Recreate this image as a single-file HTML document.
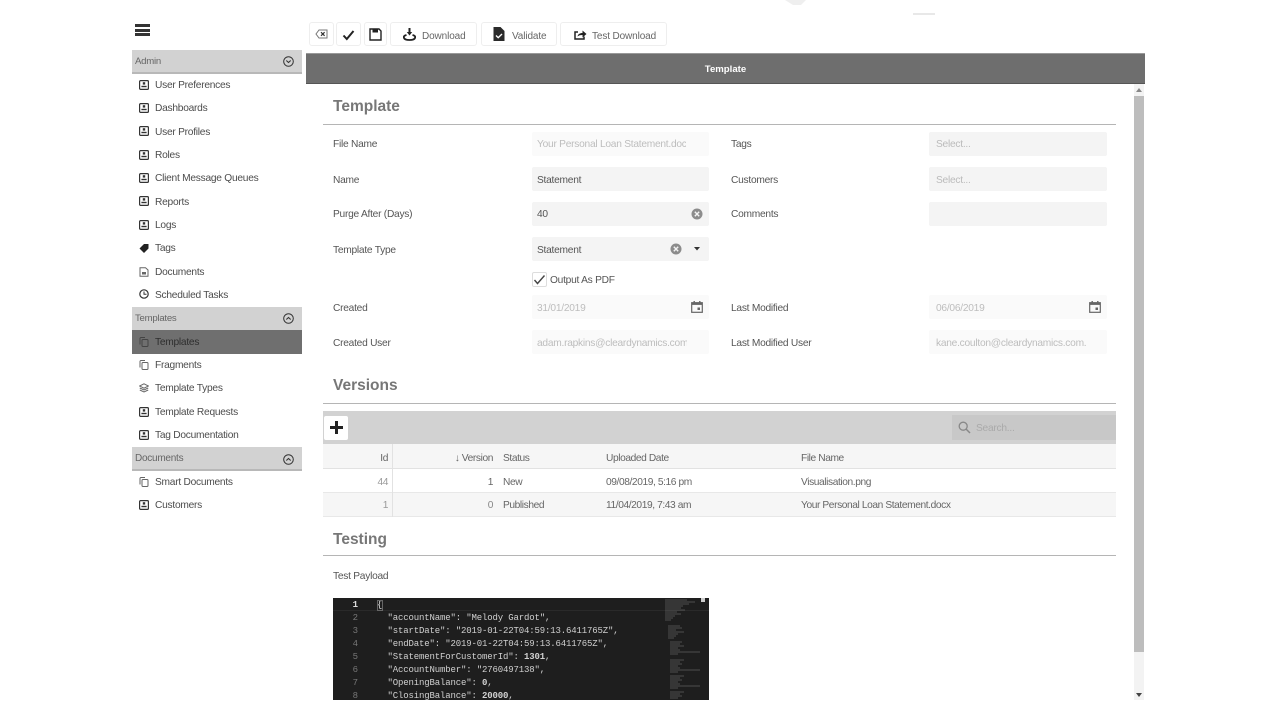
<!DOCTYPE html>
<html lang="en"><head><meta charset="utf-8"><title>Template</title>
<style>
*{box-sizing:border-box}
html,body{margin:0;padding:0;background:#fff;width:1280px;height:720px;overflow:hidden}
#p{position:relative;width:1280px;height:720px;font-family:"Liberation Sans",sans-serif;font-size:10.2px;color:#555;filter:blur(.35px);overflow:hidden}
#p div,#p span.a,#p svg.a{position:absolute}
.t{white-space:nowrap;line-height:14px;margin-top:1px;letter-spacing:-.25px}
.h{left:132px;width:170px;height:24px;background:#d2d2d2;border-bottom:2px solid #b8b8b8}
.hl{left:135px;color:#666;font-size:9.6px}
.n{left:155px;color:#4c4c4c}
.i{left:139px;width:10px;height:10px}
.b{top:22px;height:24px;background:#fff;border:1px solid #eee;border-radius:3px}
.bt{top:29px;color:#666;font-size:10px;letter-spacing:-.12px}
.l{left:333px;color:#555}.l2{left:731px;color:#555}
.f{background:#f4f4f4;border-radius:2px;height:24px;width:177px}
.f2{left:532px}.f3{left:929px;width:178px}
.d{background:#fafafa}
.v{color:#555}.ph{color:#bbb}.dis{color:#bdbdbd}
.sec{left:333px;font-weight:bold;font-size:15.5px;color:#777;line-height:18px;white-space:nowrap;margin-top:1px}
.ln{left:323px;width:793px;height:1px;background:#b5b5b5}
.code{left:377px;font-family:"Liberation Mono",monospace;font-size:9px;letter-spacing:-.15px;color:#d0d0d0;white-space:pre;line-height:13px;margin-top:1px}
.no{left:340px;width:18px;text-align:right;font-family:"Liberation Mono",monospace;font-size:9px;color:#777;line-height:13px;margin-top:1px}
.tc{color:#666;white-space:nowrap;line-height:14px;margin-top:1px;letter-spacing:-.4px}
</style></head><body>
<svg width="0" height="0" style="position:absolute"><defs>
<symbol id="card" viewBox="0 0 10 10"><rect x=".6" y=".6" width="8.8" height="8.8" rx="1" fill="none" stroke="#333" stroke-width="1.2"/><rect x="3.8" y="2.2" width="2.4" height="2.4" fill="#333"/><rect x="2.4" y="5.8" width="5.2" height="1.4" fill="#333"/></symbol>
<symbol id="copy" viewBox="0 0 10 10"><path d="M1 7.5V1.5a1 1 0 0 1 1-1h4" fill="none" stroke="#666" stroke-width="1"/><rect x="3" y="2.5" width="6" height="7" rx="1" fill="none" stroke="#666" stroke-width="1"/></symbol>
<symbol id="copyd" viewBox="0 0 10 10"><path d="M1 7.5V1.5a1 1 0 0 1 1-1h4" fill="none" stroke="#444" stroke-width="1"/><rect x="3" y="2.5" width="6" height="7" rx="1" fill="none" stroke="#444" stroke-width="1"/></symbol>
<symbol id="circ" viewBox="0 0 11 11"><circle cx="5.500" cy="5.500" r="4.800" fill="none" stroke="#333" stroke-width="1"/><path d="M3.300 6.500l2.200-2 2.200 2" fill="none" stroke="#333" stroke-width="1.100"/></symbol>
<symbol id="clear" viewBox="0 0 12 12"><circle cx="6" cy="6" r="5.500" fill="#8c8c8c"/><path d="M3.800 3.800l4.400 4.400M8.200 3.800l-4.400 4.400" stroke="#f4f4f4" stroke-width="1.400"/></symbol>
<symbol id="cal" viewBox="0 0 12 12"><rect x=".7" y="1.700" width="10.600" height="9.600" fill="none" stroke="#666" stroke-width="1.200"/><rect x=".7" y="1.700" width="10.600" height="2.200" fill="#666"/><rect x="2.500" y="0" width="1.400" height="2" fill="#666"/><rect x="8.100" y="0" width="1.400" height="2" fill="#666"/><rect x="6.500" y="6.500" width="2.500" height="2.500" fill="#666"/></symbol>
</defs></svg>
<div id="p">
<!-- faint top marks -->
<svg class="a" style="left:780px;top:0" width="160" height="18"><path d="M5 0h21l-5 5h-8z" fill="#efefef"/><rect x="133" y="13" width="22" height="2" fill="#e8e8e8"/></svg>

<!-- hamburger -->
<div style="left:135px;top:24px;width:15px;height:3px;background:#333"></div>
<div style="left:135px;top:29px;width:15px;height:3px;background:#333"></div>
<div style="left:135px;top:33px;width:15px;height:3px;background:#333"></div>

<!-- sidebar -->
<div class="h" style="top:50px"></div><div class="t hl" style="top:54px">Admin</div>
<svg class="a" style="left:283px;top:56px" width="11" height="11"><use href="#circ" transform="rotate(180 5.500 5.500)"/></svg>
<svg class="a i" style="top:80px"><use href="#card"/></svg><div class="t n" style="top:78px">User Preferences</div>
<svg class="a i" style="top:103px"><use href="#card"/></svg><div class="t n" style="top:101px">Dashboards</div>
<svg class="a i" style="top:126px"><use href="#card"/></svg><div class="t n" style="top:125px">User Profiles</div>
<svg class="a i" style="top:150px"><use href="#card"/></svg><div class="t n" style="top:148px">Roles</div>
<svg class="a i" style="top:173px"><use href="#card"/></svg><div class="t n" style="top:171px">Client Message Queues</div>
<svg class="a i" style="top:196px"><use href="#card"/></svg><div class="t n" style="top:195px">Reports</div>
<svg class="a i" style="top:220px"><use href="#card"/></svg><div class="t n" style="top:218px">Logs</div>
<svg class="a i" style="top:243px" viewBox="0 0 10 10"><path d="M.5 5.500L5 1h4.500v4.500L5 10z" fill="#222"/></svg><div class="t n" style="top:241px">Tags</div>
<svg class="a i" style="top:267px" viewBox="0 0 10 10"><path d="M1 .8h5.500L9 3v6.200H1z" fill="none" stroke="#666"/><rect x="3" y="5" width="4" height="2.500" fill="#666"/></svg><div class="t n" style="top:265px">Documents</div>
<svg class="a i" style="top:289px" viewBox="0 0 10 10"><circle cx="5" cy="5" r="4.200" fill="none" stroke="#333" stroke-width="1.200"/><path d="M5 2.500V5.300h2.500" fill="none" stroke="#333"/></svg><div class="t n" style="top:288px">Scheduled Tasks</div>

<div class="h" style="top:307px;border:0"></div><div class="t hl" style="top:311px">Templates</div>
<svg class="a" style="left:283px;top:313px" width="11" height="11"><use href="#circ"/></svg>
<div style="left:132px;top:330px;width:170px;height:24px;background:#6f6f6f"></div>
<svg class="a i" style="top:337px"><use href="#copyd"/></svg><div class="t n" style="top:335px;color:#2e2e2e">Templates</div>
<svg class="a i" style="top:360px"><use href="#copy"/></svg><div class="t n" style="top:358px">Fragments</div>
<svg class="a i" style="top:383px" viewBox="0 0 10 10"><path d="M5 .8L9.500 3 5 5.200.5 3z" fill="none" stroke="#666"/><path d="M.8 5L5 7l4.200-2M.8 7L5 9l4.200-2" fill="none" stroke="#666"/></svg><div class="t n" style="top:381px">Template Types</div>
<svg class="a i" style="top:407px"><use href="#card"/></svg><div class="t n" style="top:405px">Template Requests</div>
<svg class="a i" style="top:430px"><use href="#card"/></svg><div class="t n" style="top:428px">Tag Documentation</div>
<div class="h" style="top:447px"></div><div class="t hl" style="top:451px;font-size:10px">Documents</div>
<svg class="a" style="left:283px;top:454px" width="11" height="11"><use href="#circ"/></svg>
<svg class="a i" style="top:477px"><use href="#copy"/></svg><div class="t n" style="top:475px">Smart Documents</div>
<svg class="a i" style="top:500px"><use href="#card"/></svg><div class="t n" style="top:498px">Customers</div>

<!-- toolbar -->
<div class="b" style="left:309px;width:25px"></div>
<svg class="a" style="left:315px;top:29px" width="13" height="10" viewBox="0 0 13 10"><path d="M4 1h8v8H4L1 5z" fill="none" stroke="#777"/><path d="M6 3.200l3.600 3.600M9.600 3.200L6 6.800" stroke="#333" stroke-width="1.200"/></svg>
<div class="b" style="left:336px;width:25px"></div>
<svg class="a" style="left:342px;top:29px" width="13" height="12" viewBox="0 0 13 12"><path d="M1.500 6.500l3.300 3.500L11.500 2" fill="none" stroke="#222" stroke-width="2"/></svg>
<div class="b" style="left:364px;width:23px"></div>
<svg class="a" style="left:369px;top:28px" width="13" height="13" viewBox="0 0 13 13"><path d="M1 1h9l2 2v9H1z" fill="none" stroke="#222" stroke-width="1.400"/><rect x="3.500" y="1" width="5.500" height="3.500" fill="#222"/></svg>
<div class="b" style="left:390px;width:87px"></div>
<svg class="a" style="left:403px;top:28px" width="13" height="13" viewBox="0 0 13 13"><path d="M6.500 0v5" stroke="#222" stroke-width="2"/><path d="M3.800 4h5.400L6.500 7.500z" fill="#222"/><path d="M3.500 7C1.500 7.500.6 8.500.8 9.500c.4 1.700 3 2.500 5.700 2.500s5.300-.8 5.700-2.500c.2-1-.7-2-2.700-2.500" fill="none" stroke="#222" stroke-width="1.800"/></svg>
<div class="t bt" style="left:422px">Download</div>
<div class="b" style="left:481px;width:76px"></div>
<svg class="a" style="left:493px;top:27px" width="12" height="14" viewBox="0 0 12 14"><path d="M.5 0h7L11.500 4v10H.5z" fill="#2a2a2a"/><path d="M3 8.500l2.200 2.200L9 7" fill="none" stroke="#fff" stroke-width="1.400"/></svg>
<div class="t bt" style="left:512px">Validate</div>
<div class="b" style="left:560px;width:107px"></div>
<svg class="a" style="left:574px;top:30px" width="13" height="10" viewBox="0 0 13 10"><path d="M4 2H1v7h9V6.500" fill="none" stroke="#222" stroke-width="1.500"/><path d="M3.500 6.500C4 4 6 3 8.500 3V.5L12.500 4 8.500 7.500V5C6.500 5 5 5.300 3.500 6.500z" fill="#222"/></svg>
<div class="t bt" style="left:592px">Test Download</div>

<!-- title bar -->
<div style="left:306px;top:53px;width:839px;height:31px;background:#6e6e6e;border-top:1px solid #999;border-bottom:1px solid #555"></div>
<div class="t" style="left:306px;top:62px;width:839px;text-align:center;color:#fff;font-weight:bold;font-size:9.6px;letter-spacing:0">Template</div>

<!-- scrollbar -->
<div style="left:1134px;top:84px;width:10px;height:616px;background:#f3f3f3"></div>
<div style="left:1134px;top:96px;width:10px;height:556px;background:#bdbdbd"></div>
<svg class="a" style="left:1136px;top:88px" width="6" height="4"><path d="M0 4L3 0l3 4z" fill="#888"/></svg>
<svg class="a" style="left:1136px;top:693px" width="6" height="4"><path d="M0 0h6L3 4z" fill="#444"/></svg>

<!-- Template section -->
<div class="sec" style="top:97px">Template</div>
<div class="ln" style="top:124px"></div>

<div class="t l" style="top:137px">File Name</div>
<div class="f f2 d" style="top:132px"></div><div class="t dis" style="left:537px;top:137px;width:149px;overflow:hidden">Your Personal Loan Statement.docx</div>
<div class="t l2" style="top:137px">Tags</div>
<div class="f f3" style="top:132px"></div><div class="t ph" style="left:936px;top:137px">Select...</div>

<div class="t l" style="top:173px">Name</div>
<div class="f f2" style="top:167px"></div><div class="t v" style="left:537px;top:173px">Statement</div>
<div class="t l2" style="top:173px">Customers</div>
<div class="f f3" style="top:167px"></div><div class="t ph" style="left:936px;top:173px">Select...</div>

<div class="t l" style="top:207px">Purge After (Days)</div>
<div class="f f2" style="top:202px"></div><div class="t v" style="left:537px;top:207px">40</div>
<svg class="a" style="left:691px;top:208px" width="12" height="12"><use href="#clear"/></svg>
<div class="t l2" style="top:207px">Comments</div>
<div class="f f3" style="top:202px"></div>

<div class="t l" style="top:243px">Template Type</div>
<div class="f f2" style="top:237px"></div><div class="t v" style="left:537px;top:243px">Statement</div>
<svg class="a" style="left:670px;top:243px" width="12" height="12"><use href="#clear"/></svg>
<svg class="a" style="left:694px;top:247px" width="6" height="4"><path d="M0 0h6L3 3.500z" fill="#333"/></svg>

<div style="left:532px;top:272px;width:15px;height:15px;background:#fff;border:1px solid #ddd;border-radius:2px"></div>
<svg class="a" style="left:533px;top:274px" width="13" height="11" viewBox="0 0 13 11"><path d="M1.500 6l3 3.500L11.500 1.500" fill="none" stroke="#444" stroke-width="1.400"/></svg>
<div class="t v" style="left:550px;top:273px">Output As PDF</div>

<div class="t l" style="top:301px">Created</div>
<div class="f f2 d" style="top:295px"></div><div class="t dis" style="left:537px;top:301px">31/01/2019</div>
<svg class="a" style="left:691px;top:301px" width="12" height="12"><use href="#cal"/></svg>
<div class="t l2" style="top:301px">Last Modified</div>
<div class="f f3 d" style="top:295px"></div><div class="t dis" style="left:936px;top:301px">06/06/2019</div>
<svg class="a" style="left:1089px;top:301px" width="12" height="12"><use href="#cal"/></svg>

<div class="t l" style="top:336px">Created User</div>
<div class="f f2 d" style="top:330px"></div><div class="t dis" style="left:537px;top:336px;width:150px;overflow:hidden">adam.rapkins@cleardynamics.com.</div>
<div class="t l2" style="top:336px">Last Modified User</div>
<div class="f f3 d" style="top:330px"></div><div class="t dis" style="left:936px;top:336px;width:150px;overflow:hidden">kane.coulton@cleardynamics.com.</div>

<!-- Versions -->
<div class="sec" style="top:376px">Versions</div>
<div class="ln" style="top:403px"></div>
<div style="left:323px;top:411px;width:793px;height:33px;background:#d2d2d2"></div>
<div style="left:324px;top:416px;width:24px;height:24px;background:#fff;border-radius:2px"></div>
<div style="left:330px;top:426px;width:13px;height:3px;background:#222"></div>
<div style="left:335px;top:421px;width:3px;height:13px;background:#222"></div>
<div style="left:952px;top:415px;width:164px;height:25px;background:#c8c8c8"></div>
<svg class="a" style="left:958px;top:421px" width="13" height="13" viewBox="0 0 13 13"><circle cx="5.200" cy="5.200" r="4" fill="none" stroke="#888" stroke-width="1.300"/><path d="M8 8l4 4" stroke="#888" stroke-width="1.500"/></svg>
<div class="t" style="left:976px;top:421px;color:#aaa">Search...</div>

<div style="left:323px;top:444px;width:793px;height:25px;background:#f6f6f6;border-bottom:1px solid #e2e2e2"></div>
<div style="left:323px;top:469px;width:793px;height:24px;background:#fff;border-bottom:1px solid #e8e8e8"></div>
<div style="left:323px;top:493px;width:793px;height:24px;background:#f6f6f6;border-bottom:1px solid #e8e8e8"></div>
<div style="left:392px;top:444px;width:1px;height:73px;background:#e2e2e2"></div>

<div class="tc" style="left:340px;width:48px;text-align:right;top:451px">Id</div>
<div class="tc" style="left:420px;width:73px;text-align:right;top:451px">↓ Version</div>
<div class="tc" style="left:503px;top:451px">Status</div>
<div class="tc" style="left:606px;top:451px">Uploaded Date</div>
<div class="tc" style="left:801px;top:451px">File Name</div>

<div class="tc" style="left:340px;width:48px;text-align:right;top:475px;color:#999">44</div>
<div class="tc" style="left:420px;width:73px;text-align:right;top:475px">1</div>
<div class="tc" style="left:503px;top:475px">New</div>
<div class="tc" style="left:606px;top:475px">09/08/2019, 5:16 pm</div>
<div class="tc" style="left:801px;top:475px">Visualisation.png</div>

<div class="tc" style="left:340px;width:48px;text-align:right;top:498px;color:#999">1</div>
<div class="tc" style="left:420px;width:73px;text-align:right;top:498px;color:#888">0</div>
<div class="tc" style="left:503px;top:498px">Published</div>
<div class="tc" style="left:606px;top:498px">11/04/2019, 7:43 am</div>
<div class="tc" style="left:801px;top:498px">Your Personal Loan Statement.docx</div>

<!-- Testing -->
<div class="sec" style="top:530px">Testing</div>
<div class="ln" style="top:555px"></div>
<div class="t l" style="top:569px">Test Payload</div>

<div style="left:333px;top:598px;width:376px;height:102px;background:#1e1e1e;overflow:hidden"></div>
<div style="left:333px;top:598px;width:376px;height:13px;border-bottom:1px solid #2a2a2a"></div>
<div class="no" style="top:598px;color:#ddd;font-weight:bold">1</div>
<div class="no" style="top:611px">2</div><div class="no" style="top:624px">3</div><div class="no" style="top:637px">4</div><div class="no" style="top:650px">5</div><div class="no" style="top:663px">6</div><div class="no" style="top:676px">7</div>
<div class="no" style="top:689px;height:10px;overflow:hidden">8</div>
<div class="code" style="top:598px;color:#ddd">{</div>
<div style="left:377px;top:600px;width:6px;height:11px;border:1px solid #666"></div>
<div class="code" style="top:611px">  "accountName": "Melody Gardot",</div>
<div class="code" style="top:624px">  "startDate": "2019-01-22T04:59:13.6411765Z",</div>
<div class="code" style="top:637px">  "endDate": "2019-01-22T04:59:13.6411765Z",</div>
<div class="code" style="top:650px">  "StatementForCustomerId": <b>1301</b>,</div>
<div class="code" style="top:663px">  "AccountNumber": "2760497138",</div>
<div class="code" style="top:676px">  "OpeningBalance": <b>0</b>,</div>
<div class="code" style="top:689px;height:10px;overflow:hidden">  "ClosingBalance": <b>20000</b>,</div>
<svg class="a" style="left:664px;top:598px" width="45" height="102">
<g stroke="#777" stroke-width=".8" opacity=".75">
<path d="M1 2h22M1 4h30M1 6h24M1 8h18M1 10h16M1 12h20M1 14h12M1 16h16M1 18h10M1 20h8M1 22h6"/>
<path d="M4 28h12M4 30h14M4 32h8M4 34h16M4 36h10M4 38h8M4 40h6"/>
<path d="M6 44h12M6 46h10M6 48h14M6 50h8M6 52h10M6 54h30M6 56h8"/>
<path d="M6 62h14M6 64h10M6 66h12M6 68h8M6 70h10M6 72h30M6 74h8"/>
<path d="M6 78h14M6 80h10M6 82h12M6 84h8M6 86h10M6 88h30M6 90h8"/>
<path d="M6 94h14M6 96h10M6 98h12M6 100h8"/>
</g>
<rect x="37" y="0" width="4" height="4" fill="#ccc"/>
</svg>
</div>
</body></html>
